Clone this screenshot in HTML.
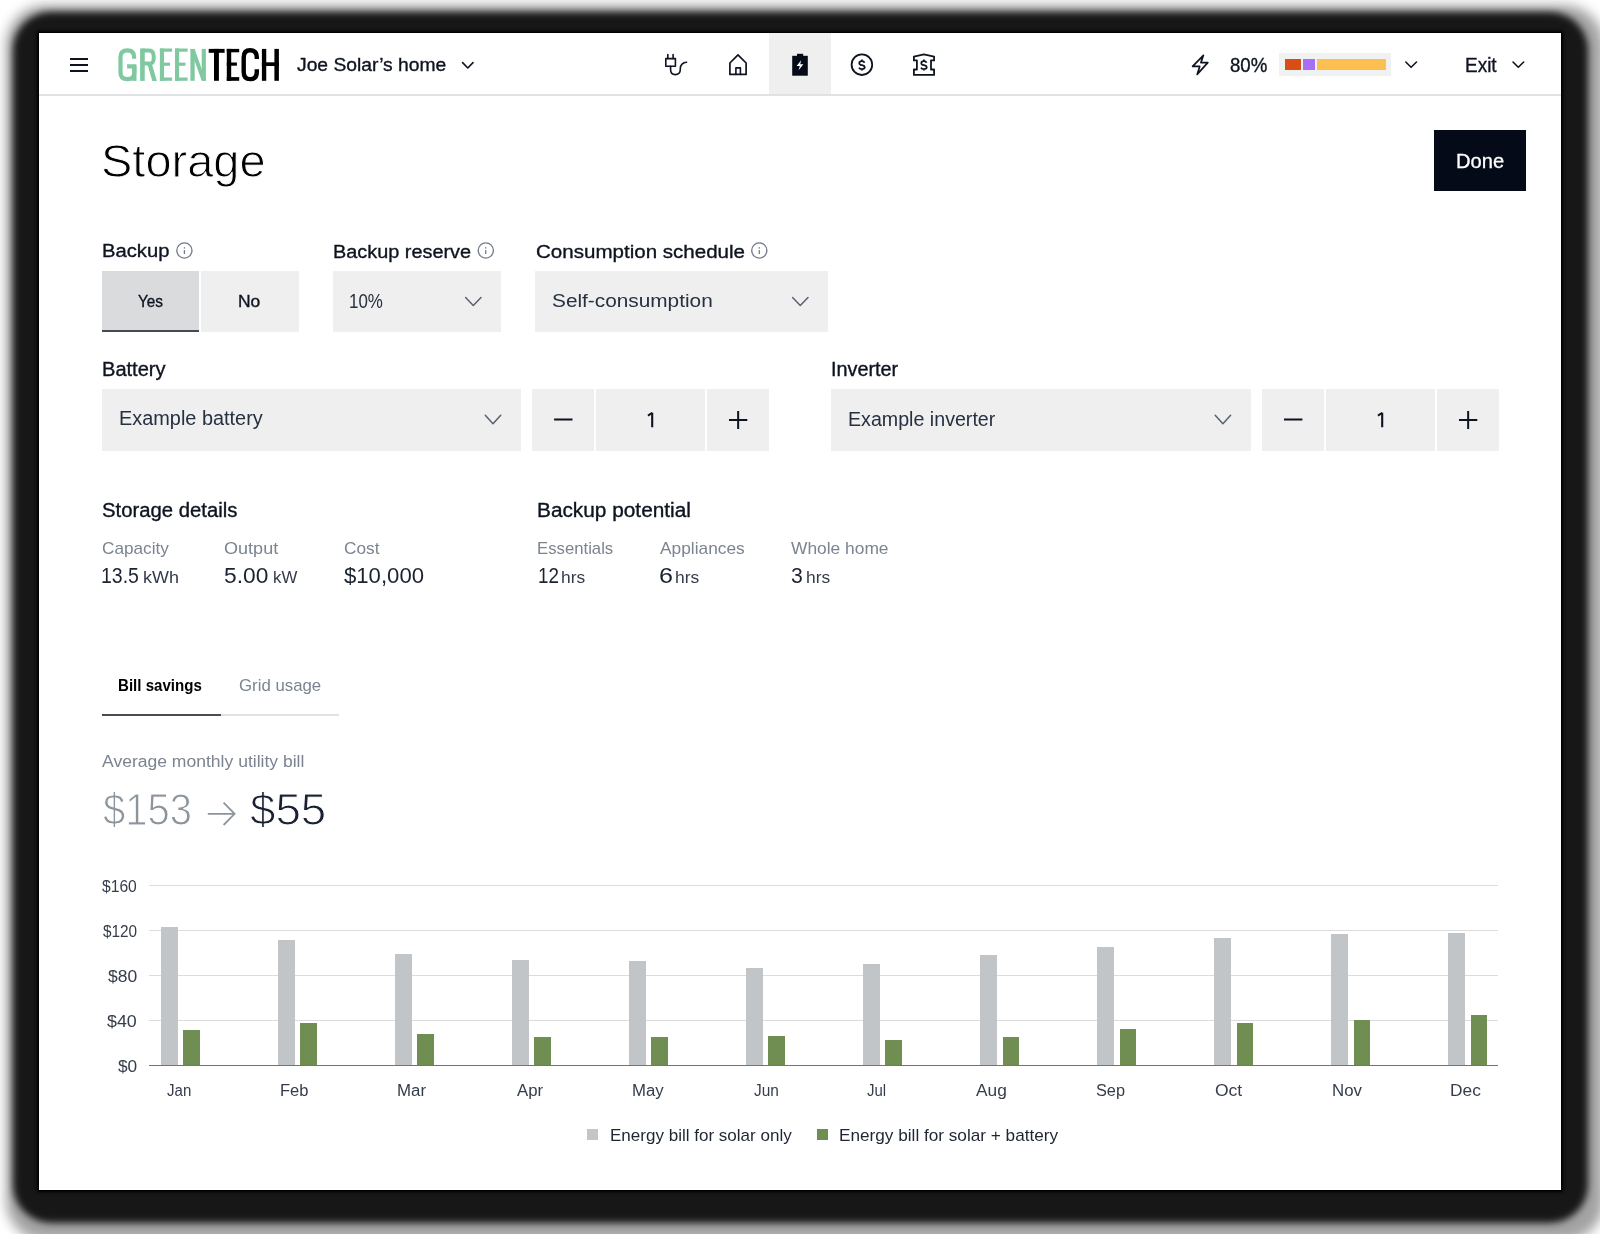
<!DOCTYPE html>
<html><head><meta charset="utf-8">
<style>
*{margin:0;padding:0;box-sizing:border-box}
html,body{width:1600px;height:1234px;overflow:hidden;background:#fff}
body{font-family:"Liberation Sans",sans-serif;color:#0e1320;position:relative}
.abs{position:absolute}
#frame{position:absolute;left:0;top:0;width:1600px;height:1234px;overflow:hidden;background:#fff}
#sh1{position:absolute;left:6px;top:5px;width:1598px;height:1236px;border-radius:40px;background:rgba(0,0,0,.36);filter:blur(6px)}
#sh2{position:absolute;left:13px;top:12px;width:1575px;height:1211px;border-radius:38px;background:#171717;filter:blur(3.5px)}
#page{position:absolute;left:39px;top:33px;width:1522px;height:1157px;background:#fff;box-shadow:0 0 0 1px #000,0 0 3px 2px #000}
.t{position:absolute;white-space:nowrap;line-height:1;transform-origin:0 0}
.box{position:absolute;background:#efefef}
svg{position:absolute;overflow:visible}
</style></head>
<body>
<div id="frame">
<div id="sh1"></div>
<div id="sh2"></div>
<div id="page"></div>

<!-- header -->
<div class="abs" style="left:39px;top:94px;width:1522px;height:2px;background:#e0e1e4"></div>
<div class="abs" style="left:769px;top:33px;width:62px;height:61px;background:#efefef"></div>
<!-- hamburger -->
<div class="abs" style="left:70px;top:58px;width:18px;height:2px;background:#0e1320"></div>
<div class="abs" style="left:70px;top:64px;width:18px;height:2px;background:#0e1320"></div>
<div class="abs" style="left:70px;top:69.5px;width:18px;height:2px;background:#0e1320"></div>
<!-- logo -->
<svg style="left:0;top:0" width="300" height="100" viewBox="0 0 300 100">
 <g fill="#80c9a0">
  <path d="M134.1 58.8 V57 C134.1 52.3 131.8 50.3 127.4 50.3 C123 50.3 120.5 52.3 120.5 57 V72.4 C120.5 77.2 123 79.1 127.4 79.1 C131.8 79.1 134.3 77.2 134.3 72.4 V66.4 H127.1" fill="none" stroke="#80c9a0" stroke-width="4.2"/>
  <rect x="132.3" y="66" width="4.2" height="14.9"/>
  <rect x="140.1" y="48.5" width="4.65" height="32.4"/>
  <path d="M142 50.5 H149.2 C152.6 50.5 153.8 52.8 153.8 57.2 C153.8 61.6 152.6 63.6 149.2 63.6 H142" fill="none" stroke="#80c9a0" stroke-width="4"/>
  <path d="M147.6 65 L152.2 65 L156.9 80.9 L152.3 80.9 Z"/>
  <rect x="159.9" y="48.5" width="4.1" height="32.4"/><rect x="159.9" y="48.5" width="12.2" height="3.2"/><rect x="159.9" y="62.6" width="10.1" height="3.2"/><rect x="159.9" y="77.5" width="12.2" height="3.3"/>
  <rect x="175" y="48.5" width="4.1" height="32.4"/><rect x="175" y="48.5" width="12.6" height="3.2"/><rect x="175" y="62.6" width="10.5" height="3.2"/><rect x="175" y="77.5" width="12.6" height="3.3"/>
  <rect x="190.4" y="48.9" width="4.3" height="31.9"/><rect x="201.7" y="48.9" width="4.2" height="31.9"/>
  <path d="M190.4 48.9 L194.6 48.9 L205.9 80.8 L201.7 80.8 Z"/>
 </g>
 <g fill="#000">
  <rect x="208.7" y="48.9" width="15.9" height="3.9"/><rect x="214" y="48.9" width="4.9" height="31.9"/>
  <rect x="226.8" y="48.9" width="4.4" height="31.9"/><rect x="226.8" y="48.9" width="12.4" height="3.4"/><rect x="226.8" y="62.5" width="10.1" height="3.2"/><rect x="226.8" y="77.1" width="12.4" height="3.7"/>
  <path d="M256.8 58.9 V57.5 C256.8 52.5 254.5 50.3 250.2 50.3 C245.9 50.3 243.7 52.5 243.7 57.5 V71.9 C243.7 76.9 245.9 79.1 250.2 79.1 C254.5 79.1 256.8 76.9 256.8 71.9 V69.3" fill="none" stroke="#000" stroke-width="4.4"/>
  <rect x="261.9" y="48.9" width="4.35" height="31.9"/><rect x="274.4" y="48.9" width="4.5" height="31.9"/><rect x="261.9" y="62.3" width="17" height="3.7"/>
 </g>
</svg>
<!-- header chevrons -->
<svg style="left:0;top:0" width="1600" height="100" viewBox="0 0 1600 100">
 <g fill="none" stroke="#0e1320" stroke-width="1.6" stroke-linecap="round" stroke-linejoin="round">
  <path d="M462.6 62.6 L467.8 68 L473 62.6"/>
  <path d="M1405.8 62 L1411.1 67.3 L1416.5 62"/>
  <path d="M1513 62 L1518.3 67.3 L1523.7 62"/>
  <!-- bolt -->
  <path d="M1203.4 55.3 L1192.6 66.4 L1199.7 66.4 L1197.2 74.4 L1207.8 62.6 L1200.9 62.6 Z" stroke-width="1.7"/>
  <!-- plug -->
  <rect x="665.8" y="58.6" width="9.6" height="7.6" stroke-width="1.6"/>
  <path d="M667.8 54.5 V58.6 M673.1 54.5 V58.6" stroke-width="1.6"/>
  <path d="M670.6 66.2 V69.5 C670.6 72.5 672.5 74.6 675.3 74.6 C678.3 74.6 680.3 72.6 680.3 69.6 V68.4 C680.3 65.2 682.8 62.2 686.6 62.2" stroke-width="1.6"/>
  <!-- house -->
  <path d="M729.9 74.4 V63 L738 54.9 L746.1 63 V74.4 Z" stroke-width="1.7"/>
  <path d="M735.9 74.4 V67.9 H740.4 V74.4" stroke-width="1.6"/>
  <!-- dollar circle -->
  <circle cx="861.9" cy="64.7" r="10.3" stroke-width="1.8"/>
  <!-- bank -->
  <path d="M913.9 56.6 L923.9 54.3 L934.1 56.6 V60.4 H931 V69.5 H934.1 V74.9 H913.9 V69.5 H916.9 V60.4 H913.9 Z" stroke-width="1.8"/>
 </g>
 <!-- battery -->
 <rect x="797" y="53.8" width="6.2" height="2.2" fill="#040a18"/>
 <rect x="792.2" y="55.8" width="15.6" height="19.9" fill="#040a18"/>
 <path d="M801.2 60.3 L796.6 66.1 L799.8 66.1 L798.6 70.2 L803.4 64.2 L800.2 64.2 Z" fill="#fff"/>
 <g fill="none" stroke="#0e1320" stroke-width="1.75">
  <path d="M864.5 62.7 C864.2 61.7 863.3 61.2 861.9 61.2 C860.3 61.2 859.3 62 859.3 63.2 C859.3 64.4 860.3 64.9 861.9 65.2 C863.6 65.5 864.7 66 864.7 67.3 C864.7 68.6 863.6 69.2 861.9 69.2 C860.4 69.2 859.4 68.6 859 67.6 M861.9 59.4 V61.2 M861.9 69.2 V70.4"/>
  <path transform="translate(62,0)" d="M864.5 62.7 C864.2 61.7 863.3 61.2 861.9 61.2 C860.3 61.2 859.3 62 859.3 63.2 C859.3 64.4 860.3 64.9 861.9 65.2 C863.6 65.5 864.7 66 864.7 67.3 C864.7 68.6 863.6 69.2 861.9 69.2 C860.4 69.2 859.4 68.6 859 67.6 M861.9 59.4 V61.2 M861.9 69.2 V70.4"/>
 </g>
</svg>
<!-- progress -->
<div class="abs" style="left:1279px;top:53px;width:112px;height:23px;background:#f0f1f1"></div>
<div class="abs" style="left:1285px;top:59px;width:16px;height:11px;background:#d94e16"></div>
<div class="abs" style="left:1303px;top:59px;width:12px;height:11px;background:#a96ef7"></div>
<div class="abs" style="left:1317px;top:59px;width:69px;height:11px;background:#fdbf4f"></div>

<!-- Done -->
<div class="abs" style="left:1434px;top:130px;width:92px;height:61px;background:#040a18"></div>

<!-- controls row 1 -->
<div class="abs" style="left:101.5px;top:270.5px;width:97.5px;height:61.5px;background:#dadbdd"></div>
<div class="abs" style="left:101.5px;top:330px;width:97.5px;height:2.2px;background:#454a54"></div>
<div class="box" style="left:201px;top:270.5px;width:97.5px;height:61.5px"></div>
<div class="box" style="left:332.5px;top:270.5px;width:168.5px;height:61.5px"></div>
<div class="box" style="left:535px;top:270.5px;width:293px;height:61.5px"></div>

<!-- row 2 -->
<div class="box" style="left:101.5px;top:388.5px;width:419.5px;height:62px"></div>
<div class="box" style="left:532.2px;top:388.5px;width:61.8px;height:62px"></div>
<div class="box" style="left:596px;top:388.5px;width:109.3px;height:62px"></div>
<div class="box" style="left:707px;top:388.5px;width:62px;height:62px"></div>
<div class="box" style="left:831px;top:388.8px;width:420px;height:62px"></div>
<div class="box" style="left:1262px;top:388.8px;width:62px;height:62px"></div>
<div class="box" style="left:1326px;top:388.8px;width:109px;height:62px"></div>
<div class="box" style="left:1437px;top:388.8px;width:61.5px;height:62px"></div>

<svg style="left:0;top:0" width="1600" height="500" viewBox="0 0 1600 500">
 <g fill="none" stroke="#596170" stroke-width="1.5" stroke-linecap="round" stroke-linejoin="round">
  <path d="M465.6 297.6 L473.3 305.5 L481 297.6"/>
  <path d="M792.6 297.6 L800.3 305.5 L808 297.6"/>
  <path d="M485.3 415.3 L493 423.8 L500.7 415.3"/>
  <path d="M1215.2 415.3 L1222.9 423.8 L1230.6 415.3"/>
 </g>
 <g fill="none" stroke="#0e1320" stroke-width="2">
  <path d="M554.1 419.6 H572.5 M1284 419.6 H1302.4"/>
  <path d="M652.2 412.8 V427.3 M1382.2 412.8 V427.3" stroke-width="2.1"/>
  <path d="M647.9 415.6 L652.2 412.9 M1377.9 415.6 L1382.2 412.9" stroke-width="1.9"/>
  <path d="M729 420 H747.3 M738.15 411 V429.1 M1459 420 H1477.3 M1468.15 411 V429.1"/>
 </g>
 <g fill="none" stroke="#737b88" stroke-width="1.35">
  <circle cx="184.4" cy="250.5" r="7.6"/>
  <circle cx="485.8" cy="250.5" r="7.6"/>
  <circle cx="759.3" cy="250.5" r="7.6"/>
 </g>
 <g fill="#737b88">
  <rect x="183.75" y="247.2" width="1.3" height="1.4"/><rect x="183.75" y="250.1" width="1.3" height="3.9"/>
  <rect x="485.05" y="247.2" width="1.3" height="1.4"/><rect x="485.05" y="250.1" width="1.3" height="3.9"/>
  <rect x="758.65" y="247.2" width="1.3" height="1.4"/><rect x="758.65" y="250.1" width="1.3" height="3.9"/>
 </g>
</svg>

<!-- tabs -->
<div class="abs" style="left:221px;top:714.3px;width:118.3px;height:1.5px;background:#e2e2e2"></div>
<div class="abs" style="left:101.5px;top:713.8px;width:119.5px;height:2.3px;background:#484c55"></div>

<!-- arrow -->
<svg style="left:0;top:0" width="400" height="900" viewBox="0 0 400 900">
 <path d="M207.8 813.8 H234.5 M223.6 802.6 L234.6 813.8 L223.6 825" fill="none" stroke="#8d959c" stroke-width="1.8" stroke-linejoin="miter"/>
</svg>

<!-- chart grid -->
<div class="abs" style="left:149.4px;top:884.8px;width:1349px;height:1.2px;background:#dcdcdc"></div>
<div class="abs" style="left:149.4px;top:930px;width:1349px;height:1.2px;background:#dcdcdc"></div>
<div class="abs" style="left:149.4px;top:975px;width:1349px;height:1.2px;background:#dcdcdc"></div>
<div class="abs" style="left:149.4px;top:1020px;width:1349px;height:1.2px;background:#dcdcdc"></div>
<div class="abs" style="left:161.00px;top:927.10px;width:16.6px;height:138.50px;background:#c2c5c8"></div>
<div class="abs" style="left:183.30px;top:1030.00px;width:16.6px;height:35.60px;background:#718e52"></div>
<div class="t" style="left:166.90px;top:1082.85px;font-size:16px;color:#353d4b;transform:scaleX(0.9398)">Jan</div>
<div class="abs" style="left:278.03px;top:939.70px;width:16.6px;height:125.90px;background:#c2c5c8"></div>
<div class="abs" style="left:300.33px;top:1023.00px;width:16.6px;height:42.60px;background:#718e52"></div>
<div class="t" style="left:279.87px;top:1082.85px;font-size:16px;color:#353d4b;transform:scaleX(1.0310)">Feb</div>
<div class="abs" style="left:395.06px;top:954.00px;width:16.6px;height:111.60px;background:#c2c5c8"></div>
<div class="abs" style="left:417.36px;top:1034.00px;width:16.6px;height:31.60px;background:#718e52"></div>
<div class="t" style="left:397.35px;top:1082.85px;font-size:16px;color:#353d4b;transform:scaleX(1.0541)">Mar</div>
<div class="abs" style="left:512.09px;top:959.70px;width:16.6px;height:105.90px;background:#c2c5c8"></div>
<div class="abs" style="left:534.39px;top:1037.10px;width:16.6px;height:28.50px;background:#718e52"></div>
<div class="t" style="left:517.25px;top:1082.85px;font-size:16px;color:#353d4b;transform:scaleX(1.0500)">Apr</div>
<div class="abs" style="left:629.12px;top:961.00px;width:16.6px;height:104.60px;background:#c2c5c8"></div>
<div class="abs" style="left:651.42px;top:1037.10px;width:16.6px;height:28.50px;background:#718e52"></div>
<div class="t" style="left:632.45px;top:1082.85px;font-size:16px;color:#353d4b;transform:scaleX(1.0470)">May</div>
<div class="abs" style="left:746.15px;top:967.90px;width:16.6px;height:97.70px;background:#c2c5c8"></div>
<div class="abs" style="left:768.45px;top:1035.80px;width:16.6px;height:29.80px;background:#718e52"></div>
<div class="t" style="left:753.50px;top:1082.85px;font-size:16px;color:#353d4b;transform:scaleX(0.9639)">Jun</div>
<div class="abs" style="left:863.18px;top:963.80px;width:16.6px;height:101.80px;background:#c2c5c8"></div>
<div class="abs" style="left:885.48px;top:1040.00px;width:16.6px;height:25.60px;background:#718e52"></div>
<div class="t" style="left:867.00px;top:1082.85px;font-size:16px;color:#353d4b;transform:scaleX(0.9347)">Jul</div>
<div class="abs" style="left:980.21px;top:955.10px;width:16.6px;height:110.50px;background:#c2c5c8"></div>
<div class="abs" style="left:1002.51px;top:1037.10px;width:16.6px;height:28.50px;background:#718e52"></div>
<div class="t" style="left:975.60px;top:1082.85px;font-size:16px;color:#353d4b;transform:scaleX(1.0809)">Aug</div>
<div class="abs" style="left:1097.24px;top:946.90px;width:16.6px;height:118.70px;background:#c2c5c8"></div>
<div class="abs" style="left:1119.54px;top:1028.60px;width:16.6px;height:37.00px;background:#718e52"></div>
<div class="t" style="left:1095.90px;top:1082.85px;font-size:16px;color:#353d4b;transform:scaleX(1.0185)">Sep</div>
<div class="abs" style="left:1214.27px;top:938.40px;width:16.6px;height:127.20px;background:#c2c5c8"></div>
<div class="abs" style="left:1236.57px;top:1023.00px;width:16.6px;height:42.60px;background:#718e52"></div>
<div class="t" style="left:1215.00px;top:1082.85px;font-size:16px;color:#353d4b;transform:scaleX(1.0906)">Oct</div>
<div class="abs" style="left:1331.30px;top:934.20px;width:16.6px;height:131.40px;background:#c2c5c8"></div>
<div class="abs" style="left:1353.60px;top:1020.00px;width:16.6px;height:45.60px;background:#718e52"></div>
<div class="t" style="left:1331.70px;top:1082.85px;font-size:16px;color:#353d4b;transform:scaleX(1.0509)">Nov</div>
<div class="abs" style="left:1448.33px;top:932.80px;width:16.6px;height:132.80px;background:#c2c5c8"></div>
<div class="abs" style="left:1470.63px;top:1014.50px;width:16.6px;height:51.10px;background:#718e52"></div>
<div class="t" style="left:1450.22px;top:1082.85px;font-size:16px;color:#353d4b;transform:scaleX(1.0818)">Dec</div>
<div class="abs" style="left:149.4px;top:1064.8px;width:1349px;height:1.6px;background:#6d7480"></div>

<!-- legend -->
<div class="abs" style="left:587.3px;top:1128.6px;width:11px;height:11.3px;background:#c2c5c9"></div>
<div class="abs" style="left:817px;top:1128.6px;width:11px;height:11.3px;background:#718e52"></div>

<div class="t" style="left:297.25px;top:55.60px;font-size:18.9px;color:#0e1320;font-weight:400;transform:scaleX(1.0202);-webkit-text-stroke:0.35px #0e1320">Joe Solar’s home</div>
<div class="t" style="left:1230.30px;top:55.90px;font-size:19.6px;color:#0e1320;font-weight:400;transform:scaleX(0.9512);-webkit-text-stroke:0.35px #0e1320">80%</div>
<div class="t" style="left:1465.33px;top:55.79px;font-size:19.5px;color:#0e1320;font-weight:400;transform:scaleX(0.9723);-webkit-text-stroke:0.35px #0e1320">Exit</div>
<div class="t" style="left:100.54px;top:139.39px;font-size:45.6px;color:#000;font-weight:400;transform:scaleX(1.0305);-webkit-text-stroke:1px #fff">Storage</div>
<div class="t" style="left:1455.99px;top:151.07px;font-size:20px;color:#fff;font-weight:400;transform:scaleX(1.0067);-webkit-text-stroke:0.3px #fff">Done</div>
<div class="t" style="left:101.85px;top:241.44px;font-size:19.2px;color:#0e1320;font-weight:400;transform:scaleX(1.0541);-webkit-text-stroke:0.35px #0e1320">Backup</div>
<div class="t" style="left:332.76px;top:241.74px;font-size:19.2px;color:#0e1320;font-weight:400;transform:scaleX(1.0354);-webkit-text-stroke:0.35px #0e1320">Backup reserve</div>
<div class="t" style="left:535.50px;top:241.94px;font-size:19.2px;color:#0e1320;font-weight:400;transform:scaleX(1.0708);-webkit-text-stroke:0.35px #0e1320">Consumption schedule</div>
<div class="t" style="left:137.70px;top:293.11px;font-size:16.4px;color:#0e1320;font-weight:400;transform:scaleX(0.9343);-webkit-text-stroke:0.35px #0e1320">Yes</div>
<div class="t" style="left:237.84px;top:293.11px;font-size:16.4px;color:#0e1320;font-weight:400;transform:scaleX(1.0637);-webkit-text-stroke:0.35px #0e1320">No</div>
<div class="t" style="left:348.64px;top:291.94px;font-size:19.8px;color:#263040;font-weight:400;transform:scaleX(0.8552);">10%</div>
<div class="t" style="left:552.30px;top:290.74px;font-size:19.2px;color:#263040;font-weight:400;transform:scaleX(1.0842);">Self-consumption</div>
<div class="t" style="left:101.62px;top:359.57px;font-size:19.4px;color:#0e1320;font-weight:400;transform:scaleX(1.0348);-webkit-text-stroke:0.35px #0e1320">Battery</div>
<div class="t" style="left:830.98px;top:359.72px;font-size:19.4px;color:#0e1320;font-weight:400;transform:scaleX(1.0218);-webkit-text-stroke:0.35px #0e1320">Inverter</div>
<div class="t" style="left:118.58px;top:409.00px;font-size:19.6px;color:#263040;font-weight:400;transform:scaleX(1.0151);">Example battery</div>
<div class="t" style="left:848.20px;top:410.30px;font-size:19.6px;color:#263040;font-weight:400;transform:scaleX(1.0021);">Example inverter</div>
<div class="t" style="left:102.00px;top:500.87px;font-size:19.4px;color:#0e1320;font-weight:400;transform:scaleX(1.0462);-webkit-text-stroke:0.35px #0e1320">Storage details</div>
<div class="t" style="left:537.43px;top:500.87px;font-size:19.4px;color:#0e1320;font-weight:400;transform:scaleX(1.0734);-webkit-text-stroke:0.35px #0e1320">Backup potential</div>
<div class="t" style="left:101.75px;top:539.71px;font-size:16.4px;color:#7b8490;font-weight:400;transform:scaleX(1.0492);">Capacity</div>
<div class="t" style="left:224.30px;top:539.71px;font-size:16.4px;color:#7b8490;font-weight:400;transform:scaleX(1.1017);">Output</div>
<div class="t" style="left:343.70px;top:539.71px;font-size:16.4px;color:#7b8490;font-weight:400;transform:scaleX(1.0513);">Cost</div>
<div class="t" style="left:537.48px;top:539.71px;font-size:16.4px;color:#7b8490;font-weight:400;transform:scaleX(1.0203);">Essentials</div>
<div class="t" style="left:659.70px;top:539.71px;font-size:16.4px;color:#7b8490;font-weight:400;transform:scaleX(1.0564);">Appliances</div>
<div class="t" style="left:790.90px;top:539.71px;font-size:16.4px;color:#7b8490;font-weight:400;transform:scaleX(1.0599);">Whole home</div>
<div class="t" style="left:101.10px;top:564.81px;font-size:21.6px;color:#1b2231;font-weight:400;transform:scaleX(0.9020);">13.5</div>
<div class="t" style="left:143.08px;top:570.15px;font-size:16px;color:#333b49;font-weight:400;transform:scaleX(1.1229);">kWh</div>
<div class="t" style="left:224.30px;top:564.81px;font-size:21.6px;color:#1b2231;font-weight:400;transform:scaleX(1.0543);">5.00</div>
<div class="t" style="left:272.75px;top:570.15px;font-size:16px;color:#333b49;font-weight:400;transform:scaleX(1.0522);">kW</div>
<div class="t" style="left:343.70px;top:564.81px;font-size:21.6px;color:#1b2231;font-weight:400;transform:scaleX(1.0250);">$10,000</div>
<div class="t" style="left:537.63px;top:564.81px;font-size:21.6px;color:#1b2231;font-weight:400;transform:scaleX(0.8724);">12</div>
<div class="t" style="left:561.21px;top:570.15px;font-size:16px;color:#333b49;font-weight:400;transform:scaleX(1.0883);">hrs</div>
<div class="t" style="left:658.54px;top:564.81px;font-size:21.6px;color:#1b2231;font-weight:400;transform:scaleX(1.1636);">6</div>
<div class="t" style="left:675.21px;top:570.15px;font-size:16px;color:#333b49;font-weight:400;transform:scaleX(1.0883);">hrs</div>
<div class="t" style="left:790.90px;top:564.81px;font-size:21.6px;color:#1b2231;font-weight:400;transform:scaleX(0.9833);">3</div>
<div class="t" style="left:806.41px;top:570.15px;font-size:16px;color:#333b49;font-weight:400;transform:scaleX(1.0883);">hrs</div>
<div class="t" style="left:118.24px;top:678.41px;font-size:15.7px;color:#000;font-weight:700;transform:scaleX(0.9611);">Bill savings</div>
<div class="t" style="left:238.75px;top:678.41px;font-size:15.7px;color:#7b8490;font-weight:400;transform:scaleX(1.0713);">Grid usage</div>
<div class="t" style="left:101.90px;top:754.15px;font-size:16px;color:#7b8490;font-weight:400;transform:scaleX(1.0960);">Average monthly utility bill</div>
<div class="t" style="left:103.25px;top:789.38px;font-size:43.6px;color:#8d959c;font-weight:400;transform:scaleX(0.9166);-webkit-text-stroke:1px #fff">$153</div>
<div class="t" style="left:250.20px;top:789.38px;font-size:43.6px;color:#1a2130;font-weight:400;transform:scaleX(1.0491);-webkit-text-stroke:1px #fff">$55</div>
<div class="t" style="left:102.10px;top:877.98px;font-size:16.2px;color:#353d4b;font-weight:400;transform:scaleX(0.9664);">$160</div>
<div class="t" style="left:102.80px;top:922.98px;font-size:16.2px;color:#353d4b;font-weight:400;transform:scaleX(0.9470);">$120</div>
<div class="t" style="left:107.70px;top:967.88px;font-size:16.2px;color:#353d4b;font-weight:400;transform:scaleX(1.0813);">$80</div>
<div class="t" style="left:107.10px;top:1012.88px;font-size:16.2px;color:#353d4b;font-weight:400;transform:scaleX(1.1035);">$40</div>
<div class="t" style="left:117.70px;top:1057.88px;font-size:16.2px;color:#353d4b;font-weight:400;transform:scaleX(1.0665);">$0</div>
<div class="t" style="left:609.85px;top:1127.28px;font-size:16.2px;color:#1f2633;font-weight:400;transform:scaleX(1.0518);">Energy bill for solar only</div>
<div class="t" style="left:838.94px;top:1127.28px;font-size:16.2px;color:#1f2633;font-weight:400;transform:scaleX(1.0611);">Energy bill for solar + battery</div>
</div>
</body></html>
